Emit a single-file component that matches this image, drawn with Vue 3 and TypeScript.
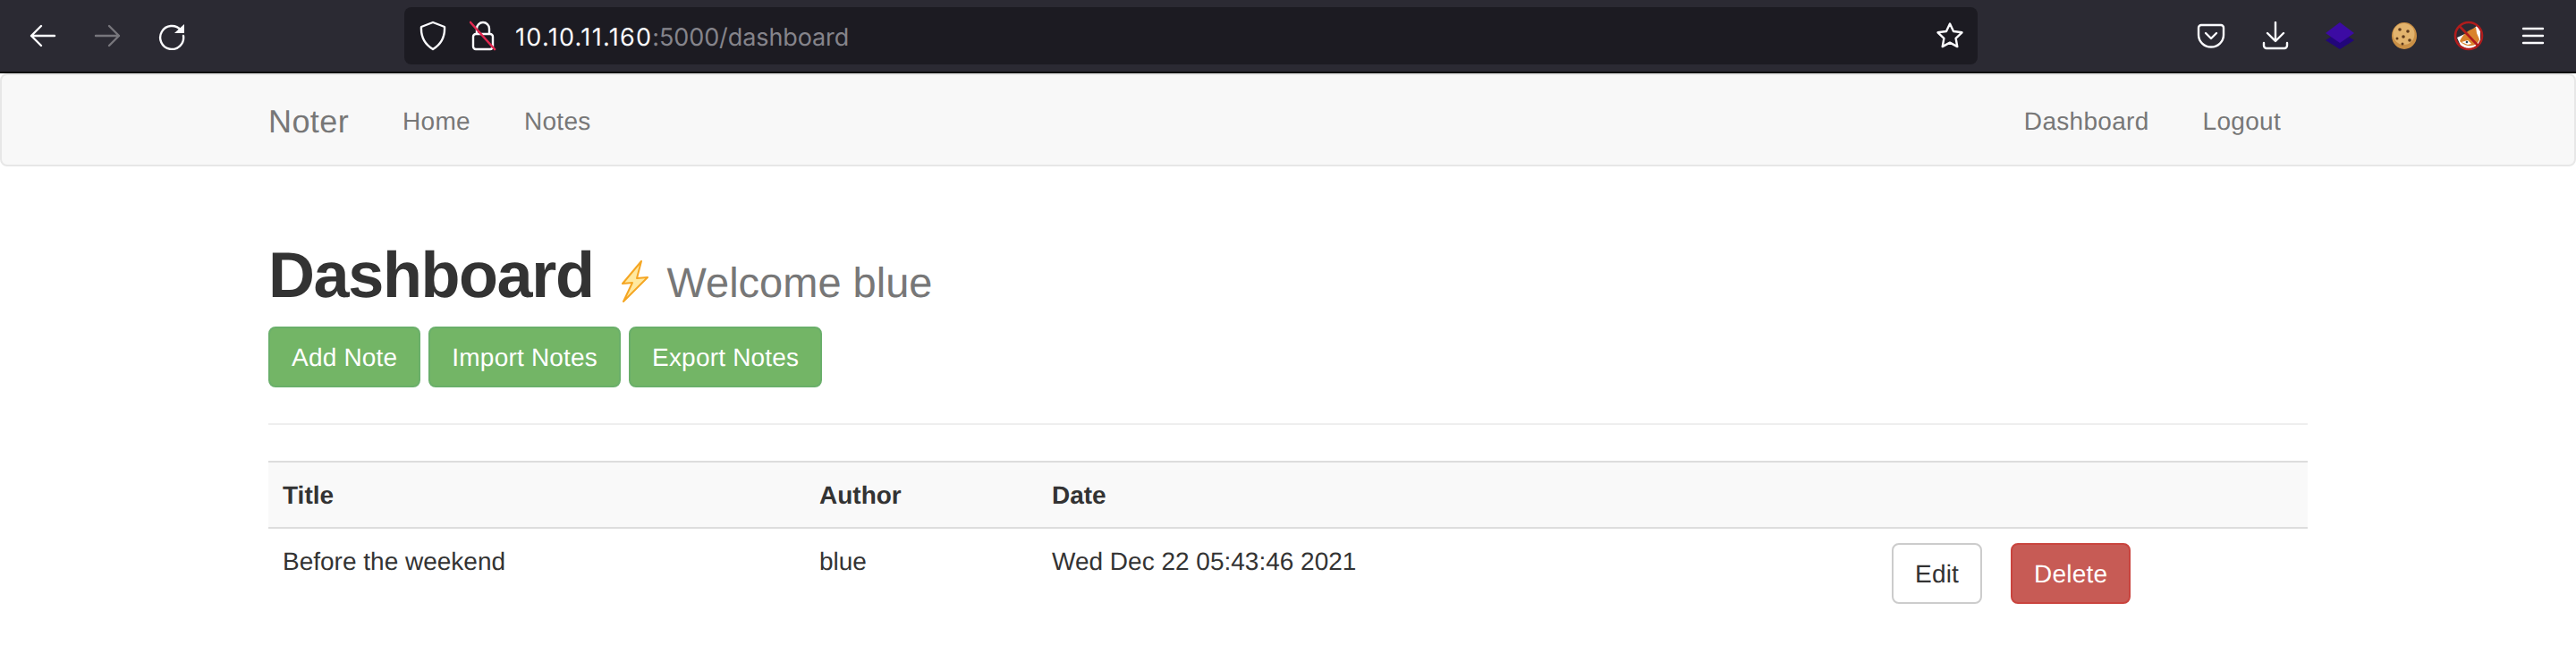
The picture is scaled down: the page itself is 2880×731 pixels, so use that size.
<script setup lang="ts">
const notes = [
  { title: 'Before the weekend', author: 'blue', date: 'Wed Dec 22 05:43:46 2021' },
]
</script>

<template>
  <div class="page">
    <header class="toolbar">
      <button type="button" class="tool">
        <svg width="32" height="32" viewBox="0 0 32 32" fill="none" stroke="#fbfbfe" stroke-width="2.4" stroke-linecap="round" stroke-linejoin="round">
          <path d="M3 16h26M14 5 3 16l11 11" />
        </svg>
      </button>
      <button type="button" class="tool">
        <svg width="32" height="32" viewBox="0 0 32 32" fill="none" stroke="#77767c" stroke-width="2.4" stroke-linecap="round" stroke-linejoin="round">
          <path d="M3 16h26M18 5l11 11-11 11" />
        </svg>
      </button>
      <button type="button" class="tool">
        <svg width="32" height="32" viewBox="0 0 32 32" fill="none">
          <path d="M26 9.5A13 13 0 1 0 29 16" stroke="#fbfbfe" stroke-width="2.4" stroke-linecap="round" />
          <path d="M30 3v10H19z" fill="#fbfbfe" />
        </svg>
      </button>

      <div class="urlbar">
        <svg class="shield" width="30" height="34" viewBox="0 0 30 34" fill="none" stroke="#fbfbfe" stroke-width="2.4" stroke-linejoin="round">
          <path d="M15 2 28 7c.6 11-3 19-13 25C5 26 1.400 18 2 7z" />
        </svg>
        <svg class="lock" width="30" height="34" viewBox="0 0 30 34" fill="none" stroke-linecap="round">
          <path d="M8 14V9a7 7 0 0 1 14 0v5" stroke="#fbfbfe" stroke-width="2.4" />
          <rect x="4" y="15" width="22" height="17" rx="3" stroke="#fbfbfe" stroke-width="2.400" />
          <path d="M1 2 28 32" stroke="#e22850" stroke-width="2.600" />
        </svg>
        <span class="url"><span class="host">10.10.11.160</span><span class="rest">:5000/dashboard</span></span>
        <svg class="star" width="32" height="32" viewBox="0 0 32 32" fill="none" stroke="#fbfbfe" stroke-width="2.4" stroke-linejoin="round">
          <path d="M16 2.500 20 11l9.500 1.300-6.900 6.500 1.700 9.300L16 23.600 7.700 28.100l1.700-9.300-6.900-6.500L12 11z" />
        </svg>
      </div>

      <div class="spacer" />

      <button type="button" class="tool">
        <svg width="32" height="32" viewBox="0 0 32 32" fill="none" stroke="#fbfbfe" stroke-width="2.4" stroke-linecap="round" stroke-linejoin="round">
          <path d="M5 4h22a3 3 0 0 1 3 3v8a14 13.500 0 0 1-28 0V7a3 3 0 0 1 3-3z" />
          <path d="M10 13l6 6 6-6" />
        </svg>
      </button>
      <button type="button" class="tool">
        <svg width="32" height="32" viewBox="0 0 32 32" fill="none" stroke="#fbfbfe" stroke-width="2.4" stroke-linecap="round" stroke-linejoin="round">
          <path d="M16 1v20M7 13l9 9 9-9" />
          <path d="M3 24v3a3 3 0 0 0 3 3h20a3 3 0 0 0 3-3v-3" />
        </svg>
      </button>
      <button type="button" class="tool">
        <svg width="34" height="32" viewBox="0 0 34 32">
          <path d="M17 11 33 21 17 31 1 21z" fill="#22067a" />
          <path d="M17 1 33 13 17 24 1 13z" fill="#3c0ba3" />
        </svg>
      </button>
      <button type="button" class="tool">
        <svg class="cookie" width="32" height="32" viewBox="0 0 32 32">
          <ellipse cx="16" cy="16" rx="14" ry="15" fill="#c98f45" />
          <ellipse cx="15.500" cy="14" rx="12" ry="12" fill="#e2b36d" />
          <g fill="#5e3a1c">
            <circle cx="11" cy="9" r="1.800" />
            <circle cx="20" cy="11" r="1.800" />
            <circle cx="15" cy="17" r="1.800" />
            <circle cx="8" cy="19" r="1.500" />
            <circle cx="22" cy="21" r="1.800" />
            <circle cx="14" cy="25" r="1.500" />
          </g>
        </svg>
      </button>
      <button type="button" class="tool">
        <svg width="34" height="34" viewBox="0 0 34 34">
          <circle cx="17" cy="17" r="15" fill="#2b2a33" />
          <path d="M4 19 8 28l8 4 10-2 4-8V10l-4-4-7 6z" fill="#fff" />
          <path d="M7 23c3-7 9-12 15-14l3-2 1 7 3 7c-1 4-5 7-9 7-5 1-10-2-13-5z" fill="#d9822b" />
          <path d="M9 24l7 3 4-1-4-4z" fill="#fff" />
          <circle cx="15" cy="24" r="1.300" fill="#2d4a5e" />
          <circle cx="17" cy="17" r="15" fill="none" stroke="#b01c1c" stroke-width="2.600" />
          <path d="M7 6.500 27 27.500" stroke="#b01c1c" stroke-width="2.600" />
        </svg>
      </button>
      <button type="button" class="tool">
        <svg width="32" height="32" viewBox="0 0 32 32" stroke="#fbfbfe" stroke-width="2.400" stroke-linecap="round">
          <path d="M5 8h22M5 16h22M5 24h22" />
        </svg>
      </button>
    </header>

    <nav class="navbar">
      <div class="nav-left">
        <a class="brand">Noter</a>
        <a class="nav-link">Home</a>
        <a class="nav-link">Notes</a>
      </div>
      <div class="nav-right">
        <a class="nav-link">Dashboard</a>
        <a class="nav-link">Logout</a>
      </div>
    </nav>

    <main class="container">
      <h1 class="title">
        <span class="title-text">Dashboard</span>
        <small class="welcome">
          <svg class="bolt" width="34" height="48" viewBox="0 0 34 48">
            <path d="M26 1 5 26l11-1L6 46l27-27-12 1z" fill="#ffe9a0" stroke="#f5a623" stroke-width="2" stroke-linejoin="round" />
          </svg>
          Welcome blue
        </small>
      </h1>

      <div class="actions">
        <a class="btn btn-success">Add Note</a>
        <a class="btn btn-success">Import Notes</a>
        <a class="btn btn-success">Export Notes</a>
      </div>

      <hr class="rule">

      <table class="notes">
        <thead>
          <tr>
            <th class="col-title">Title</th>
            <th class="col-author">Author</th>
            <th class="col-date">Date</th>
            <th />
          </tr>
        </thead>
        <tbody>
          <tr v-for="note in notes" :key="note.title">
            <td>{{ note.title }}</td>
            <td>{{ note.author }}</td>
            <td>{{ note.date }}</td>
            <td class="cell-actions">
              <div class="row-actions">
                <a class="btn btn-default">Edit</a>
                <a class="btn btn-danger">Delete</a>
              </div>
            </td>
          </tr>
        </tbody>
      </table>
    </main>
  </div>
</template>

<style>
html,
body {
  margin: 0;
  background: #fff;
}
</style>

<style scoped>
.page {
  font-family: 'Liberation Sans', Arial, sans-serif;
  font-size: 28px;
  line-height: 40px;
  color: #333;
  text-rendering: geometricPrecision;
}

.toolbar {
  display: flex;
  align-items: center;
  height: 80px;
  padding: 0 12px;
  background: #2b2a33;
  border-bottom: 2px solid #0c0c0d;
}

.tool {
  display: flex;
  flex: none;
  align-items: center;
  justify-content: center;
  width: 72px;
  height: 64px;
  padding: 0;
  border: none;
  background: transparent;
}

.cookie {
  filter: blur(0.6px);
}

.urlbar {
  display: flex;
  flex: none;
  align-items: center;
  width: 1759px;
  height: 64px;
  margin-left: 224px;
  border-radius: 8px;
  background: #1c1b22;
  font-family: Inter, 'Liberation Sans', sans-serif;
}

.shield {
  margin-left: 17px;
}

.lock {
  margin-left: 26px;
}

.url {
  margin-top: 3px;
  margin-left: 21px;
  font-size: 27px;
}

.host {
  color: #fbfbfe;
  letter-spacing: 1.3px;
}

.rest {
  color: #85848b;
  letter-spacing: -0.1px;
}

.star {
  margin-right: 15px;
  margin-left: auto;
}

.spacer {
  flex: 1;
}

.navbar {
  display: flex;
  justify-content: space-between;
  box-sizing: border-box;
  height: 104px;
  padding: 0 298px;
  border: 2px solid #e7e7e7;
  border-radius: 8px;
  background: #f8f8f8;
}

.nav-left,
.nav-right {
  display: flex;
  align-items: center;
  padding-top: 3px;
}

.brand {
  margin-right: 30px;
  font-size: 36px;
  letter-spacing: 0.4px;
  color: #777;
}

.nav-link {
  padding: 0 30px;
  letter-spacing: 0.3px;
  color: #777;
}

.container {
  padding: 0 300px;
}

.title {
  margin: 83px 0 17px;
  font-size: 72px;
  font-weight: 700;
  line-height: 79px;
  color: #333;
}

.title-text {
  letter-spacing: -1.4px;
}

.welcome {
  font-size: 47px;
  font-weight: 400;
  line-height: 1;
  color: #777;
}

.bolt {
  margin: 0 7px 0 28px;
  vertical-align: -7px;
}

.actions {
  display: flex;
  gap: 9px;
}

.btn {
  box-sizing: border-box;
  height: 68px;
  padding: 13px 24px 11px;
  border: 2px solid transparent;
  border-radius: 8px;
  letter-spacing: 0.2px;
}

.btn-success {
  border-color: #6aaf6a;
  background: #73b566;
  color: #fff;
}

.btn-default {
  border-color: #ccc;
  background: #fff;
  color: #333;
}

.btn-danger {
  border-color: #c9443e;
  background: #c75b55;
  color: #fff;
}

.rule {
  height: 2px;
  margin: 40px 0;
  border: none;
  background: #eee;
}

.notes {
  width: 100%;
  table-layout: fixed;
  border-collapse: collapse;
}

.notes th,
.notes td {
  padding: 17px 16px 15px;
  text-align: left;
  vertical-align: top;
}

.notes th {
  border-top: 2px solid #ddd;
  border-bottom: 2px solid #ddd;
  background: #f9f9f9;
  font-weight: 700;
}

.notes .cell-actions {
  padding: 16px;
}

.col-title {
  width: 568px;
}

.col-author {
  width: 228px;
}

.col-date {
  width: 907px;
}

.row-actions {
  display: flex;
  gap: 32px;
}
</style>
